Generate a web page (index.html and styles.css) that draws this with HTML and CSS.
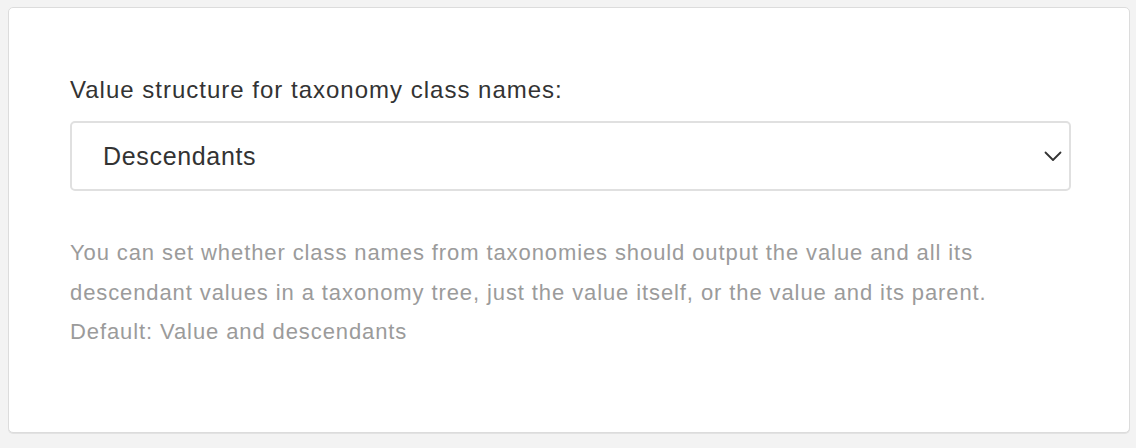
FILE: index.html
```html
<!DOCTYPE html>
<html lang="en">
<head>
<meta charset="utf-8">
<title>Taxonomy setting</title>
<link rel="stylesheet" href="styles.css">
</head>
<body>
<div class="card">
  <label class="label">Value structure for taxonomy class names:</label>
  <div class="select">
    <span class="select-value">Descendants</span>
    <svg class="chevron" width="18" height="11" viewBox="0 0 18 11" aria-hidden="true"><path d="M1.5 1.5 L9 9 L16.5 1.5" fill="none" stroke="#333" stroke-width="1.8" stroke-linecap="round" stroke-linejoin="round"/></svg>
  </div>
  <p class="help">You can set whether class names from taxonomies should output the value and all its descendant values in a taxonomy tree, just the value itself, or the value and its parent.<br>Default: Value and descendants</p>
</div>
</body>
</html>
```
FILE: styles.css
```css
html, body {
  margin: 0;
  padding: 0;
}
body {
  background: #f3f3f3;
  padding: 7px 6px 13px 8px;
  font-family: "Liberation Sans", Arial, sans-serif;
  color: #333;
}
.card {
  background: #fff;
  border: 1px solid #dcdcdc;
  border-radius: 5px;
  box-shadow: 0 1px 0 #e2e2e2;
  height: 426px;
  box-sizing: border-box;
  padding: 67px 58px 0 61px;
}
.label {
  display: block;
  font-size: 24px;
  letter-spacing: 1px;
  line-height: 30px;
  color: #333;
  margin-bottom: 16px;
}
.select {
  display: flex;
  align-items: center;
  justify-content: space-between;
  height: 70px;
  box-sizing: border-box;
  border: 2px solid #e0e0e0;
  border-radius: 5px;
  padding: 0 7px 0 31px;
}
.select-value {
  font-size: 25px;
  letter-spacing: 0.67px;
  color: #333;
}
.help {
  margin: 42px 0 0;
  font-size: 22px;
  letter-spacing: 0.9px;
  line-height: 39.5px;
  color: #9b9b9b;
}
```
